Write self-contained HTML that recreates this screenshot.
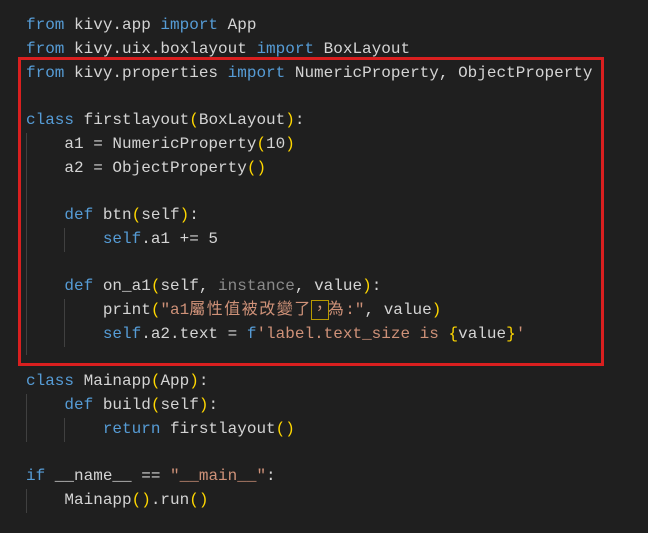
<!DOCTYPE html>
<html><head><meta charset="utf-8"><style>
html,body{margin:0;padding:0;background:#1f1f1f;width:648px;height:533px;overflow:hidden}
.code{position:absolute;left:26px;top:14px;font-family:"Liberation Mono","Noto Sans CJK TC",monospace;font-size:16px;line-height:23.75px;color:#d4d4d4;white-space:pre}
.k{color:#569cd6}.s{color:#ce9178}.p{color:#ffd700}.g{color:#8a8a8a}
.c{letter-spacing:1.5px}
.box{position:absolute;left:18px;top:57px;width:580px;height:303px;border:3px solid #d91f1f}
.gd{position:absolute;width:1px;background:#404040}
.hl{outline:1px solid #b89a00}
</style></head><body>
<div class="gd" style="left:26px;top:133px;height:222px"></div>
<div class="gd" style="left:64px;top:228px;height:24px"></div>
<div class="gd" style="left:64px;top:299px;height:48px"></div>
<div class="gd" style="left:26px;top:394px;height:48px"></div>
<div class="gd" style="left:64px;top:418px;height:24px"></div>
<div class="gd" style="left:26px;top:489px;height:24px"></div>
<div class="code"><span class="k">from</span> kivy.app <span class="k">import</span> App
<span class="k">from</span> kivy.uix.boxlayout <span class="k">import</span> BoxLayout
<span class="k">from</span> kivy.properties <span class="k">import</span> NumericProperty, ObjectProperty

<span class="k">class</span> firstlayout<span class="p">(</span>BoxLayout<span class="p">)</span>:
    a1 = NumericProperty<span class="p">(</span>10<span class="p">)</span>
    a2 = ObjectProperty<span class="p">()</span>

    <span class="k">def</span> btn<span class="p">(</span>self<span class="p">)</span>:
        <span class="k">self</span>.a1 += 5

    <span class="k">def</span> on_a1<span class="p">(</span>self, <span class="g">instance</span>, value<span class="p">)</span>:
        print<span class="p">(</span><span class="s">"a1<span class="c">屬性值被改變了</span><span class="hl">，</span><span class="c">為</span>:"</span>, value<span class="p">)</span>
        <span class="k">self</span>.a2.text = <span class="k">f</span><span class="s">'label.text_size is </span><span class="p">{</span>value<span class="p">}</span><span class="s">'</span>

<span class="k">class</span> Mainapp<span class="p">(</span>App<span class="p">)</span>:
    <span class="k">def</span> build<span class="p">(</span>self<span class="p">)</span>:
        <span class="k">return</span> firstlayout<span class="p">()</span>

<span class="k">if</span> __name__ == <span class="s">"__main__"</span>:
    Mainapp<span class="p">()</span>.run<span class="p">()</span></div>
<div class="box"></div>
</body></html>
